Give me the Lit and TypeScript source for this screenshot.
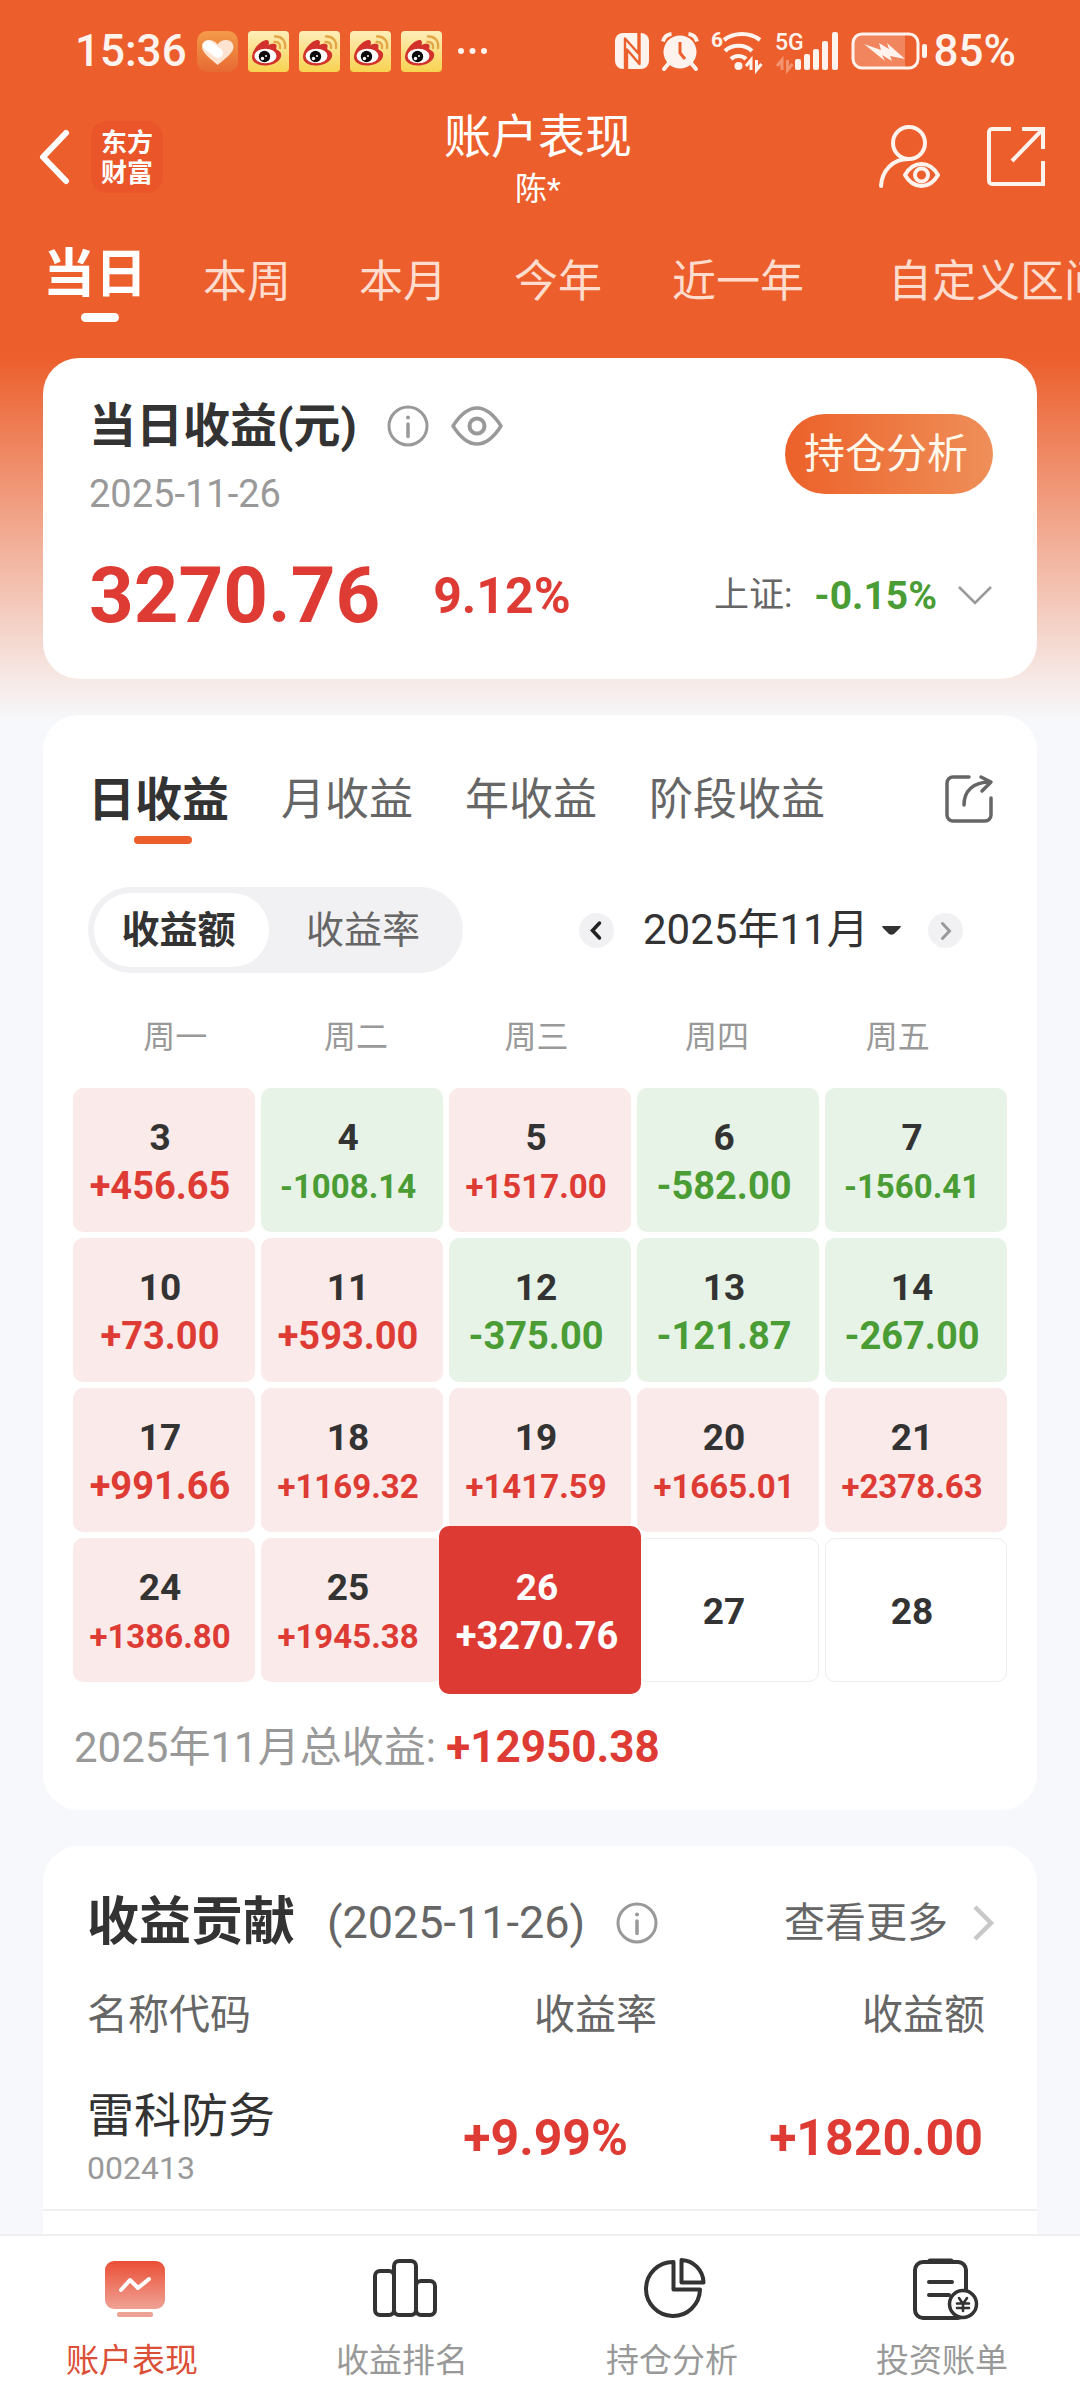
import { LitElement, html, css, svg } from "lit";
import { customElement, state } from "lit/decorators.js";
import { classMap } from "lit/directives/class-map.js";

interface Day {
  day: number;
  value?: string;
  selected?: boolean;
}

const DAYS: Day[] = [
  { day: 3, value: "+456.65" },
  { day: 4, value: "-1008.14" },
  { day: 5, value: "+1517.00" },
  { day: 6, value: "-582.00" },
  { day: 7, value: "-1560.41" },
  { day: 10, value: "+73.00" },
  { day: 11, value: "+593.00" },
  { day: 12, value: "-375.00" },
  { day: 13, value: "-121.87" },
  { day: 14, value: "-267.00" },
  { day: 17, value: "+991.66" },
  { day: 18, value: "+1169.32" },
  { day: 19, value: "+1417.59" },
  { day: 20, value: "+1665.01" },
  { day: 21, value: "+2378.63" },
  { day: 24, value: "+1386.80" },
  { day: 25, value: "+1945.38" },
  { day: 26, value: "+3270.76", selected: true },
  { day: 27 },
  { day: 28 },
];

const RANGES = ["当日", "本周", "本月", "今年", "近一年", "自定义区间"];
const PERIODS = ["日收益", "月收益", "年收益", "阶段收益"];
const WEEKDAYS = ["周一", "周二", "周三", "周四", "周五"];

const base = css`
  * {
    box-sizing: border-box;
  }
  button,
  select {
    margin: 0;
    padding: 0;
    border: 0;
    background: none;
    color: inherit;
    font: inherit;
    cursor: pointer;
  }
  a {
    color: inherit;
    text-decoration: none;
  }
  svg {
    display: block;
    flex: none;
    overflow: visible;
  }
  h1,
  h2,
  p {
    margin: 0;
  }
`;

const infoIcon = html`<svg width="42" height="42" viewBox="0 0 42 42" fill="none" stroke="#999" aria-hidden="true">
  <circle cx="21" cy="21" r="19" stroke-width="3"></circle>
  <path d="M21 19v12.500" stroke-width="3.500" stroke-linecap="round"></path>
  <circle cx="21" cy="12.500" r="2" fill="#999" stroke="none"></circle>
</svg>`;

@customElement("status-bar")
export class StatusBar extends LitElement {
  static styles = [
    base,
    css`
      :host {
        display: flex;
        align-items: center;
        justify-content: space-between;
        height: 102px;
        padding: 0 64px 0 75px;
        color: #fff3ee;
        font-size: 44px;
        font-weight: 500;
        line-height: 52px;
      }
      .group {
        display: flex;
        align-items: center;
      }
      .apps {
        gap: 10px;
      }
      .apps .more {
        margin-left: 5px;
      }
      .signals {
        gap: 12px;
      }
      .battery {
        display: flex;
        align-items: center;
        gap: 5px;
      }
    `,
  ];

  private weibo(id: string) {
    return html`<svg width="41" height="41" viewBox="0 0 41 41" aria-hidden="true">
      <defs>
        <linearGradient id=${id} x1="0" y1="0" x2="0" y2="1">
          <stop offset="0" stop-color="#fdeeba"></stop>
          <stop offset="1" stop-color="#f8d250"></stop>
        </linearGradient>
      </defs>
      <rect width="41" height="41" rx="4" fill="url(#${id})"></rect>
      <path
        d="M4 26C4 19 12 10 18 9c3-.3 3.500 2.500 2.500 5 4-2 9-2 8 2-.3 1.500-.6 2.300 1 3 3.500 1.500 4.500 4.500 3 8C30 32 23 34.500 16.500 34.500 10 34.500 4 31.500 4 26z"
        fill="#d2322b"
      ></path>
      <ellipse cx="17.500" cy="25" rx="11" ry="7.300" fill="#fff"></ellipse>
      <circle cx="16.500" cy="25.500" r="5.700" fill="#0b0b0b"></circle>
      <circle cx="14.500" cy="27.500" r="1.700" fill="#fff"></circle>
      <circle cx="18" cy="25" r="1" fill="#fff"></circle>
      <path d="M26.500 11c4-.5 6 2 5.500 6M27 5.500c7-.5 11 4.500 10 11.500" fill="none" stroke="#e3a646" stroke-width="2.400" stroke-linecap="round"></path>
    </svg>`;
  }

  render() {
    return html`
      <div class="group apps">
        <span class="clock">15:36</span>
        <svg width="41" height="41" viewBox="0 0 41 41" aria-hidden="true">
          <defs>
            <linearGradient id="sq" x1="0" y1="0" x2="0" y2="1">
              <stop offset="0" stop-color="#f39b49"></stop>
              <stop offset="1" stop-color="#e76a33"></stop>
            </linearGradient>
          </defs>
          <rect width="41" height="41" rx="10" fill="url(#sq)"></rect>
          <path
            d="M20.500 34C14 28 5 22 5 15.500 5 11.500 8 9 12 9c3.500 0 6.500 1.500 8.500 4.500C22.500 10.500 25.500 9 29 9c4.500 0 7.500 3 7.500 7 0 6-9.500 12.500-16 18z"
            fill="#fde3d0"
          ></path>
          <path d="M11 14.500l10 7.500" stroke="#fff" stroke-width="10" stroke-linecap="round"></path>
        </svg>
        ${["w1", "w2", "w3", "w4"].map((id) => this.weibo(id))}
        <svg class="more" width="32" height="8" viewBox="0 0 32 8" fill="#fff3ee" aria-hidden="true">
          <circle cx="4" cy="4" r="3"></circle>
          <circle cx="15.500" cy="4" r="3"></circle>
          <circle cx="27" cy="4" r="3"></circle>
        </svg>
      </div>
      <div class="group signals">
        <svg width="34" height="36" viewBox="0 0 34 36" aria-hidden="true">
          <rect width="34" height="36" rx="8" fill="#fff3ee"></rect>
          <path d="M10 36V5.500l13.500 15V0M24.500 0v31L12 16.500V36" fill="none" stroke="#ec5f2c" stroke-width="2.400" stroke-linejoin="round"></path>
        </svg>
        <svg width="38" height="38" viewBox="0 0 38 38" fill="none" stroke="#fff3ee" aria-hidden="true">
          <circle cx="19" cy="20" r="16.500" fill="#fff3ee" stroke="none"></circle>
          <path d="M8 31l-5 6M30 31l5 6" stroke-width="4" stroke-linecap="round"></path>
          <path d="M2 9.500C3 5 6 2.500 10.500 2M36 9.500C35 5 32 2.500 27.500 2" stroke-width="4"></path>
          <path d="M19 10v11l5 6" stroke="#ec5f2c" stroke-width="3"></path>
        </svg>
        <svg width="52" height="40" viewBox="0 0 52 40" fill="none" stroke="#fff3ee" aria-hidden="true">
          <text x="0" y="16" font-size="21" font-weight="700" fill="#fff3ee" stroke="none">6</text>
          <path d="M13 9c10-8 26-8 36 0M14 20c7-7 20-7 27 0M20 28c4-4 11-4 15 0" stroke-width="4.200"></path>
          <circle cx="27.500" cy="35" r="4" fill="#fff3ee" stroke="none"></circle>
          <path d="M40 39V29l-5 6M45.500 29v10l5-6" stroke-width="3"></path>
        </svg>
        <svg width="64" height="40" viewBox="0 0 64 40" fill="#fff3ee" aria-hidden="true">
          <text x="0" y="19" font-size="23" font-weight="500">5G</text>
          <path d="M7 39V29l-5 6M12.500 29v10l5-6" fill="none" stroke="#fff3ee" stroke-opacity=".35" stroke-width="3"></path>
          <rect x="20" y="28" width="6" height="11" rx="2"></rect>
          <rect x="29" y="23" width="6" height="16" rx="2"></rect>
          <rect x="38" y="18" width="6" height="21" rx="2"></rect>
          <rect x="47" y="10" width="6" height="29" rx="2"></rect>
          <rect x="57" y="1" width="6" height="38" rx="2"></rect>
        </svg>
        <div class="battery">
          <svg width="78" height="38" viewBox="0 0 78 38" aria-hidden="true">
            <path d="M11 3h43v32H11a9 9 0 0 1-9-9V12a9 9 0 0 1 9-9z" fill="#fff3ee" fill-opacity=".26"></path>
            <rect x="2" y="2" width="65" height="34" rx="9" fill="none" stroke="#fff3ee" stroke-width="3"></rect>
            <rect x="71" y="12" width="5" height="14" rx="2" fill="#fff3ee"></rect>
            <path d="M13 12l17 6-2-7 10 6-2-6 18 16-15-3 2 5-10-6 3 6z" fill="#fff3ee"></path>
          </svg>
          <span>85%</span>
        </div>
      </div>
    `;
  }
}

@customElement("app-root")
export class AppRoot extends LitElement {
  @state() private mode: "amount" | "rate" = "amount";

  static styles = [
    base,
    css`
      :host {
        display: flex;
        flex-direction: column;
        min-height: 100vh;
        overflow: hidden;
        background: linear-gradient(#ec5f2c 358px, #f6e9e6 680px, #f6f8fb 720px);
        color: #333;
        font-family: Roboto, "Noto Sans CJK SC", sans-serif;
      }
      .header {
        display: grid;
        grid-template-columns: 1fr auto 1fr;
        align-items: center;
        height: 110px;
        padding: 0 34px 0 30px;
        color: #fff;
      }
      .start,
      .end {
        display: flex;
        align-items: center;
        gap: 20px;
      }
      .start {
        padding-left: 7px;
      }
      .end {
        justify-content: flex-end;
        gap: 44px;
      }
      .brand {
        width: 72px;
        padding: 5px 0 7px;
        border-radius: 16px;
        background: #ea5529;
        font-family: "Noto Sans CJK SC", sans-serif;
        font-size: 26px;
        font-weight: 700;
        line-height: 30px;
        text-align: center;
      }
      .heading {
        padding-top: 4px;
        text-align: center;
      }
      .heading h1 {
        font-size: 47px;
        font-weight: 400;
        line-height: 60px;
      }
      .heading p {
        font-size: 32px;
        line-height: 44px;
      }
      .ranges {
        display: grid;
        grid-template-columns: 160px 156px 155px 158px 216px auto;
        align-items: start;
        height: 146px;
        padding: 33px 0 0 43px;
      }
      .range {
        justify-self: start;
        padding-top: 7px;
        color: #ffdccd;
        font-size: 44px;
        line-height: 60px;
        text-align: left;
        white-space: nowrap;
      }
      .range.active {
        display: flex;
        flex-direction: column;
        gap: 8px;
        width: 114px;
        padding-top: 0;
        color: #fff;
        font-size: 52px;
        font-weight: 700;
      }
      .range.active::after {
        content: "";
        align-self: center;
        width: 38px;
        height: 9px;
        border-radius: 5px;
        background: #fff;
      }
      .content {
        flex: 1;
        display: flex;
        flex-direction: column;
        gap: 36px;
        padding: 0 43px;
      }
      .card {
        border-radius: 36px;
        background: #fff;
      }
      .row {
        display: flex;
        align-items: center;
        justify-content: space-between;
      }
      .today {
        padding: 32px 44px 41px 46px;
      }
      .title {
        display: flex;
        align-items: center;
      }
      .title h2 {
        font-size: 47px;
        font-weight: 700;
        line-height: 72px;
      }
      .title .info {
        margin: 0 22px 0 30px;
      }
      .date {
        padding-top: 2px;
        color: #999;
        font-size: 38px;
        line-height: 60px;
      }
      .analyse {
        width: 208px;
        height: 80px;
        margin-bottom: 6px;
        padding-right: 6px;
        border-radius: 40px;
        background: linear-gradient(90deg, #ec6129, #ef8f59);
        color: #fff8ea;
        font-size: 41px;
        line-height: 60px;
      }
      .figures {
        margin-top: 30px;
        line-height: 84px;
      }
      .up {
        color: #dd3b33;
      }
      .down {
        color: #4a9c35;
      }
      .figures .sum {
        display: flex;
        align-items: center;
        gap: 53px;
        font-weight: 700;
      }
      .sum .profit {
        font-size: 78px;
      }
      .sum .percent {
        font-size: 50px;
      }
      .index {
        display: flex;
        align-items: center;
        color: #666;
        font-size: 35px;
      }
      .index strong {
        margin: 0 20px 0 22px;
        font-size: 39px;
      }
      .calendar {
        padding: 49px 30px 31px;
      }
      .periods {
        padding: 0 14px 0 15px;
        align-items: flex-start;
      }
      .tabs {
        display: flex;
        align-items: flex-start;
        gap: 40px;
        color: #666;
        font-size: 44px;
        line-height: 72px;
      }
      .tab {
        padding-right: 12px;
      }
      .tab.active {
        display: flex;
        flex-direction: column;
        color: #333;
        font-size: 47px;
        font-weight: 700;
      }
      .tab.active::after {
        content: "";
        width: 58px;
        height: 8px;
        margin-left: 46px;
        border-radius: 4px;
        background: #ec5f2c;
      }
      .share {
        margin-top: 11px;
      }
      .controls {
        margin-top: 43px;
        padding: 0 44px 0 15px;
      }
      .segment {
        display: grid;
        grid-template-columns: 175px 188px;
        padding: 6px;
        border-radius: 43px;
        background: #f1f1f4;
        color: #666;
        font-size: 38px;
        line-height: 74px;
      }
      .segment .active {
        padding-right: 6px;
        border-radius: 37px;
        background: #fff;
        color: #333;
        font-weight: 700;
      }
      .month {
        display: flex;
        align-items: center;
        font-size: 42px;
      }
      .month select {
        appearance: none;
        margin: 0 13px 0 29px;
        line-height: 56px;
      }
      .month .step {
        margin-left: 27px;
      }
      .month .step:first-child {
        margin-left: 0;
      }
      .weekdays {
        display: grid;
        grid-template-columns: repeat(5, 1fr);
        margin: 40px 19px 27px 12px;
        color: #999;
        font-size: 32px;
        line-height: 48px;
        text-align: center;
      }
      .days {
        display: grid;
        grid-template-columns: repeat(5, 1fr);
        grid-auto-rows: 144px;
        gap: 6px;
      }
      .day {
        display: flex;
        flex-direction: column;
        align-items: center;
        justify-content: center;
        padding: 3px 8px 0 0;
        border: 1px solid transparent;
        border-radius: 10px;
        font-size: 37px;
        font-weight: 700;
        line-height: 49px;
      }
      .day.gain {
        background: #faeae9;
      }
      .day.loss {
        background: #e7f3e6;
      }
      .day.empty {
        border-color: #ededed;
      }
      .day.selected {
        z-index: 1;
        margin: -12px -10px;
        padding-right: 6px;
        background: #dd3a33;
        color: #fff;
      }
      .gain .value {
        color: #dd3b33;
      }
      .loss .value {
        color: #4a9c35;
      }
      .selected .value {
        color: #fff;
      }
      .value {
        font-size: 38px;
      }
      .value.long {
        font-size: 33px;
      }
      .total {
        padding: 34px 0 0 1px;
        color: #999;
        font-size: 42px;
        line-height: 62px;
      }
      .total strong {
        font-size: 44px;
      }
      .contribution {
        flex: 1;
        border-radius: 36px 36px 0 0;
      }
      .summary {
        padding: 41px 42px 0 44px;
        line-height: 72px;
      }
      .summary h2 {
        margin-right: 32px;
        color: #333;
        font-size: 52px;
        font-weight: 700;
      }
      .summary .title {
        color: #666;
        font-size: 45px;
      }
      .summary .title .info {
        margin: 0 0 0 31px;
      }
      .more {
        display: flex;
        align-items: center;
        gap: 25px;
        color: #666;
        font-size: 41px;
      }
      table {
        width: 100%;
        border-collapse: collapse;
        table-layout: fixed;
      }
      th {
        padding: 4px 52px 0 0;
        height: 107px;
        color: #666;
        font-size: 41px;
        font-weight: 400;
        line-height: 60px;
        text-align: right;
      }
      td {
        height: 144px;
        padding: 0 54px 0 0;
        border-bottom: 2px solid #efefef;
        font-size: 50px;
        font-weight: 700;
        line-height: 60px;
        text-align: right;
      }
      th:first-child,
      td:first-child {
        padding-left: 44px;
        width: 346px;
        font-weight: 400;
        text-align: left;
      }
      th:nth-child(2) {
        padding-right: 0;
        width: 268px;
      }
      td:nth-child(2) {
        padding-right: 29px;
      }
      .name {
        font-size: 47px;
        line-height: 60px;
      }
      .code {
        color: #999;
        font-size: 32px;
        line-height: 44px;
      }
      .nav {
        display: grid;
        grid-template-columns: repeat(4, 1fr);
        height: 166px;
        border-top: 2px solid #efefef;
        background: #fff;
        color: #999;
        font-size: 33px;
        line-height: 48px;
      }
      .nav a {
        display: flex;
        flex-direction: column;
        align-items: center;
        gap: 18px;
        padding: 21px 6px 0 0;
      }
      .nav svg {
        margin-left: 6px;
      }
      .nav .active {
        color: #dc4f37;
      }
    `,
  ];

  private renderDay(d: Day) {
    const gain = d.value?.startsWith("+") ?? false;
    const cls = {
      day: true,
      gain: gain && !d.selected,
      loss: !!d.value && !gain,
      empty: !d.value,
      selected: !!d.selected,
    };
    const long = !!d.value && d.value.length > 7 && !d.selected;
    return html`<button class=${classMap(cls)}>
      <span>${d.day}</span>
      ${d.value ? html`<span class=${classMap({ value: true, long })}>${d.value}</span>` : null}
    </button>`;
  }

  private stepIcon(next: boolean) {
    return html`<svg width="35" height="35" viewBox="0 0 35 35" fill="none" aria-hidden="true">
      <circle cx="17.500" cy="17.500" r="17.500" fill="#f1f1f4"></circle>
      ${next
        ? svg`<path d="M14.500 10.500l7 7.500-7 7.500" stroke="#999" stroke-width="3" stroke-linecap="round"></path>`
        : svg`<path d="M20.500 10l-7 7.500 7 7.500" stroke="#222" stroke-width="3.500" stroke-linecap="round"></path>`}
    </svg>`;
  }

  render() {
    return html`
      <status-bar></status-bar>
      <header class="header">
        <div class="start">
          <button aria-label="返回">
            <svg width="34" height="56" viewBox="0 0 34 56" fill="none" aria-hidden="true">
              <path d="M29 4L6 28l23 24" stroke="#fff" stroke-width="6" stroke-linecap="round" stroke-linejoin="round"></path>
            </svg>
          </button>
          <div class="brand">东方<br />财富</div>
        </div>
        <div class="heading">
          <h1>账户表现</h1>
          <p>陈*</p>
        </div>
        <div class="end">
          <button aria-label="账户">
            <svg width="64" height="64" viewBox="0 0 64 64" fill="none" stroke="#fff3ee" stroke-width="4" aria-hidden="true">
              <circle cx="31" cy="18" r="16"></circle>
              <path d="M3 61C4 46 14 34 31 34" stroke-linecap="round"></path>
              <path d="M27 50c4-7 10-11 16.500-11S56 43 60 50c-4 7-10 11-16.500 11S31 57 27 50z" stroke-linejoin="round"></path>
              <circle cx="43.500" cy="50" r="6.500"></circle>
            </svg>
          </button>
          <button aria-label="分享">
            <svg width="60" height="62" viewBox="0 0 60 62" fill="none" stroke="#fff3ee" stroke-width="4" aria-hidden="true">
              <path d="M25 3H6a3 3 0 0 0-3 3v49a3 3 0 0 0 3 3h51V35"></path>
              <path d="M36 3h21v20M57 3L26 35"></path>
            </svg>
          </button>
        </div>
      </header>
      <nav class="ranges">
        ${RANGES.map((r, i) => html`<button class=${classMap({ range: true, active: i === 0 })}>${r}</button>`)}
      </nav>

      <main class="content">
        <section class="card today">
          <div class="row">
            <div>
              <div class="title">
                <h2>当日收益(元)</h2>
                <button class="info" aria-label="说明">${infoIcon}</button>
                <button aria-label="隐藏金额">
                  <svg width="52" height="42" viewBox="0 0 52 42" fill="none" stroke="#999" stroke-width="3.500" aria-hidden="true">
                    <path d="M2 21C9 10 16 3 26 3s17 7 24 18C43 32 36 39 26 39S9 32 2 21z" stroke-linejoin="round"></path>
                    <circle cx="26" cy="21" r="7.500" stroke-width="4"></circle>
                  </svg>
                </button>
              </div>
              <div class="date">2025-11-26</div>
            </div>
            <button class="analyse">持仓分析</button>
          </div>
          <div class="row figures">
            <div class="sum up">
              <span class="profit">3270.76</span>
              <span class="percent">9.12%</span>
            </div>
            <button class="index">
              上证: <strong class="down">-0.15%</strong>
              <svg width="36" height="22" viewBox="0 0 36 22" fill="none" aria-hidden="true">
                <path d="M2 2l16 16L34 2" stroke="#999" stroke-width="2.500"></path>
              </svg>
            </button>
          </div>
        </section>

        <section class="card calendar">
          <div class="row periods">
            <div class="tabs">
              ${PERIODS.map((p, i) => html`<button class=${classMap({ tab: true, active: i === 0 })}>${p}</button>`)}
            </div>
            <button class="share" aria-label="分享">
              <svg width="48" height="48" viewBox="0 0 48 48" fill="none" stroke="#666" stroke-width="3.500" stroke-linecap="round" stroke-linejoin="round" aria-hidden="true">
                <path d="M24 2H8a6 6 0 0 0-6 6v32a6 6 0 0 0 6 6h32a6 6 0 0 0 6-6V23"></path>
                <path d="M19 30C19 16 28 7 45 7M36 2l10 5-9 9"></path>
              </svg>
            </button>
          </div>
          <div class="row controls">
            <div class="segment">
              <button class=${classMap({ active: this.mode === "amount" })} @click=${() => (this.mode = "amount")}>收益额</button>
              <button class=${classMap({ active: this.mode === "rate" })} @click=${() => (this.mode = "rate")}>收益率</button>
            </div>
            <div class="month">
              <button class="step" aria-label="上个月">${this.stepIcon(false)}</button>
              <select aria-label="月份">
                <option>2025年11月</option>
              </select>
              <svg width="19" height="9" viewBox="0 0 19 9" fill="#333" aria-hidden="true">
                <path d="M0 0h19l-1 2-6 6q-2.500 1.500-5 0L1 2z"></path>
              </svg>
              <button class="step" aria-label="下个月">${this.stepIcon(true)}</button>
            </div>
          </div>
          <div class="weekdays">${WEEKDAYS.map((w) => html`<span>${w}</span>`)}</div>
          <div class="days">${DAYS.map((d) => this.renderDay(d))}</div>
          <p class="total">2025年11月总收益: <strong class="up">+12950.38</strong></p>
        </section>

        <section class="card contribution">
          <div class="row summary">
            <div class="title">
              <h2>收益贡献</h2>
              <span>(2025-11-26)</span>
              <button class="info" aria-label="说明">${infoIcon}</button>
            </div>
            <a class="more" href="#more">
              查看更多
              <svg width="22" height="36" viewBox="0 0 22 36" fill="none" aria-hidden="true">
                <path d="M2 2l16 16L2 34" stroke="#c8c8c8" stroke-width="4.500"></path>
              </svg>
            </a>
          </div>
          <table>
            <thead>
              <tr>
                <th>名称代码</th>
                <th>收益率</th>
                <th>收益额</th>
              </tr>
            </thead>
            <tbody>
              <tr>
                <td>
                  <div class="name">雷科防务</div>
                  <div class="code">002413</div>
                </td>
                <td class="up">+9.99%</td>
                <td class="up">+1820.00</td>
              </tr>
            </tbody>
          </table>
        </section>
      </main>

      <nav class="nav">
        <a class="active" href="#account">
          <svg width="62" height="62" viewBox="0 0 62 62" aria-hidden="true">
            <defs>
              <linearGradient id="acc" x1="0" y1="0" x2="0" y2="1">
                <stop offset="0" stop-color="#ea4f36"></stop>
                <stop offset="1" stop-color="#f0a295"></stop>
              </linearGradient>
            </defs>
            <rect x="1" y="4" width="60" height="48" rx="9" fill="url(#acc)"></rect>
            <rect x="13" y="55" width="36" height="5" rx="2" fill="#eda294"></rect>
            <path d="M17 33l9-10 8 8 11-9" fill="none" stroke="#fff" stroke-width="4" stroke-linecap="round" stroke-linejoin="round"></path>
          </svg>
          账户表现
        </a>
        <a href="#rank">
          <svg width="66" height="62" viewBox="0 0 66 62" fill="none" stroke="#333" stroke-width="4" aria-hidden="true">
            <rect x="3" y="14" width="19" height="44" rx="5"></rect>
            <rect x="22" y="4" width="22" height="54" rx="5"></rect>
            <rect x="44" y="24" width="19" height="34" rx="5"></rect>
          </svg>
          收益排名
        </a>
        <a href="#position">
          <svg width="62" height="62" viewBox="0 0 62 62" fill="none" stroke="#333" stroke-width="4" stroke-linejoin="round" aria-hidden="true">
            <path d="M29.500 5a27 27 0 1 0 26.500 27.500H29.500z"></path>
            <path d="M37.500 3a23 23 0 0 1 22 22.500h-22z"></path>
          </svg>
          持仓分析
        </a>
        <a href="#bill">
          <svg width="68" height="62" viewBox="0 0 68 62" fill="none" stroke="#333" stroke-width="4" stroke-linecap="round" aria-hidden="true">
            <rect x="4" y="5" width="51" height="56" rx="8"></rect>
            <path d="M19 4h21" stroke-width="5"></path>
            <path d="M18 25h23M18 38h20"></path>
            <circle cx="52" cy="47" r="13.500" fill="#fff" stroke-width="3.500"></circle>
            <path d="M48 41l4 6 4-6M52 47v7M46 46.500h12M46 51h12" stroke-width="2.600"></path>
          </svg>
          投资账单
        </a>
      </nav>
    `;
  }
}
